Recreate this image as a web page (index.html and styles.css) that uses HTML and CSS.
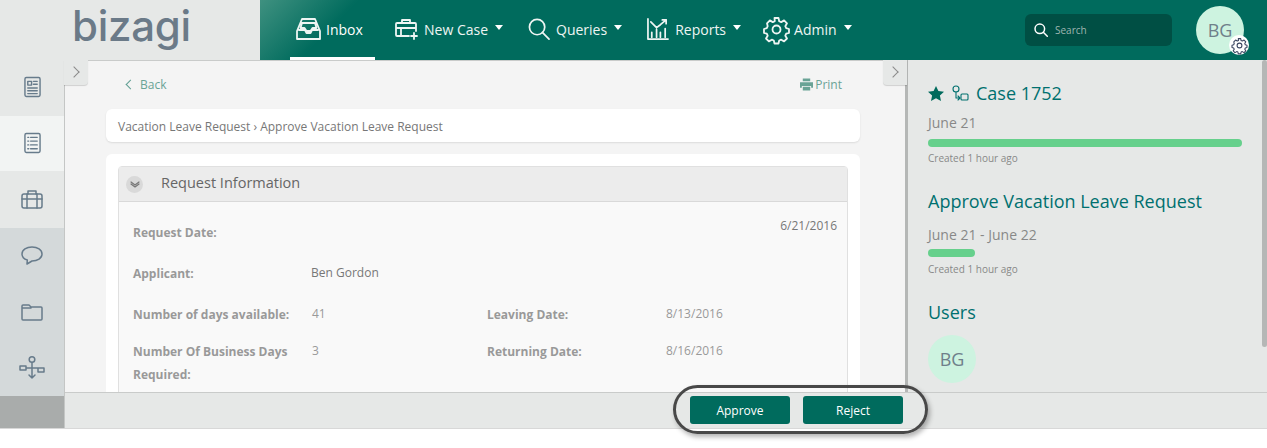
FILE: index.html
```html
<!DOCTYPE html>
<html lang="en">
<head>
	<meta charset="utf-8">
	<title>Bizagi - Inbox</title>
	<link rel="stylesheet" href="styles.css">
</head>
<body>
<div class="shell">

	<header class="topbar">
		<div class="brand"><span class="logo">bizagi</span></div>
		<nav class="nav">
			<a class="nav-item active">
				<svg class="ico-inbox" viewBox="0 0 25 22"><path d="M6 1h13l5 12v8H1v-8z M3 12h6l1.500 3h4l1.500-3h6 M6 5h13l1.500 5h-4l-2 3h-4l-2-3h-4z"/></svg>
				<span>Inbox</span>
			</a>
			<a class="nav-item">
				<svg class="ico-case" viewBox="0 0 24 22"><path d="M14 18H2a1 1 0 0 1-1-1V6a1 1 0 0 1 1-1h18a1 1 0 0 1 1 1v7 M7 5V2h8v3 M1 10h20 M6 10v8 M19 15v6 M16 18h6"/></svg>
				<span>New Case</span><i class="caret"></i>
			</a>
			<a class="nav-item">
				<svg class="ico-query" viewBox="0 0 23 23"><circle cx="9.500" cy="9.500" r="8"/><path d="M15 15l7 7"/></svg>
				<span>Queries</span><i class="caret"></i>
			</a>
			<a class="nav-item reports">
				<svg class="ico-report" viewBox="0 0 23 23"><path d="M1 1v21h21 M5 20v-5 M10 20v-8 M14 20v-5 M19 20v-9 M4 4l6 6 4-3 6-5 M16 2h4v4"/></svg>
				<span>Reports</span><i class="caret"></i>
			</a>
			<a class="nav-item">
				<svg class="ico-gear" viewBox="0 0 25 25"><path d="M10.500 1h4l.7 3.200 2 .9 2.900-1.700 2.900 2.900-1.700 2.900.9 2 2.800.8v4l-2.800.7-.9 2 1.700 2.800-2.900 2.900-2.900-1.700-2 .8-.7 3h-4l-.7-3-2-.8-2.900 1.700-2.900-2.900 1.700-2.800-.9-2-2.800-.7v-4l2.800-.8.900-2L3 6.300l2.900-2.900 2.900 1.700 2-.9z"/><circle cx="12.500" cy="12.500" r="4"/></svg>
				<span>Admin</span><i class="caret"></i>
			</a>
		</nav>
		<div class="search">
			<svg viewBox="0 0 14 14"><circle cx="5.800" cy="5.800" r="4.800"/><path d="M9.300 9.300l4 4"/></svg>
			<span>Search</span>
		</div>
		<div class="avatar top-avatar">
			BG
			<span class="avatar-gear">
				<svg viewBox="0 0 25 25"><path d="M10.500 1h4l.7 3.200 2 .9 2.900-1.700 2.900 2.900-1.700 2.900.9 2 2.800.8v4l-2.800.7-.9 2 1.700 2.800-2.900 2.900-2.900-1.700-2 .8-.7 3h-4l-.7-3-2-.8-2.900 1.700-2.900-2.900 1.700-2.800-.9-2-2.800-.7v-4l2.800-.8.900-2L3 6.300l2.900-2.900 2.900 1.700 2-.9z"/><circle cx="12.500" cy="12.500" r="4"/></svg>
			</span>
		</div>
	</header>

	<div class="workspace">
		<aside class="rail">
			<div class="rail-item h56 lift">
				<svg viewBox="0 0 18 22"><rect x="1" y="1" width="16" height="20" rx="1.500"/><path d="M4 5h4v4H4z M10 5h4 M10 8h4 M4 12h10 M4 15h10 M4 18h10"/></svg>
			</div>
			<div class="rail-item h55 lift current">
				<svg viewBox="0 0 18 22"><rect x="1" y="1" width="16" height="20" rx="1.500"/><path d="M4 5h1 M7 5h7 M4 9h1 M7 9h7 M4 13h1 M7 13h7 M4 17h1 M7 17h7"/></svg>
			</div>
			<div class="rail-item h57 lift">
				<svg class="wide" viewBox="0 0 22 20"><rect x="1" y="5" width="20" height="14" rx="2"/><path d="M7 5V2h8v3 M1 10h20 M6 5v14 M16 5v14"/></svg>
			</div>
			<div class="rail-item h56 dark">
				<svg class="wide" viewBox="0 0 22 20"><path d="M11 1c5.500 0 10 2.900 10 7s-4.500 7-10 7l-5 3 .3-4C3 13 1 11 1 8c0-4.100 4.500-7 10-7z"/></svg>
			</div>
			<div class="rail-item h56 dark">
				<svg class="wide" viewBox="0 0 22 18"><path d="M1 3a1 1 0 0 1 1-1h6l2 2h10a1 1 0 0 1 1 1v11a1 1 0 0 1-1 1H2a1 1 0 0 1-1-1z M1 5h9"/></svg>
			</div>
			<div class="rail-item h56 dark">
				<svg class="flow" viewBox="0 0 26 24"><circle cx="13" cy="3.500" r="2.800"/><path d="M13 6.500V22 M10 19l3 3 3-3 M1 10h6v4H1z M19 12h6v4h-6z M7 12h12"/></svg>
			</div>
			<div class="rail-foot"></div>
		</aside>

		<div class="content">
			<div class="panes">
				<main class="main">
					<span class="tab main-tab"><i class="chev"></i></span>
					<div class="main-top">
						<a class="back"><i class="chev-left"></i>Back</a>
						<a class="print">
							<svg viewBox="0 0 14 13"><path d="M3 0h8v3H3z M0 4h14v6h-2V8H2v2H0z M3 9h8v4H3z"/></svg>Print
						</a>
					</div>
					<div class="crumb">Vacation Leave Request › Approve Vacation Leave Request</div>
					<div class="card">
						<section class="panel">
							<div class="panel-head">
								<span class="collapse"><svg viewBox="0 0 10 7"><path d="M1 1l4 3 4-3 M1 3l4 3 4-3"/></svg></span>
								Request Information
							</div>
							<div class="panel-body">
								<div class="row wide-row">
									<b>Request Date:</b>
									<span class="date">6/21/2016</span>
								</div>
								<div class="row">
									<b>Applicant:</b>
									<span class="name">Ben Gordon</span>
								</div>
								<div class="row short-row">
									<b>Number of days available:</b>
									<span>41</span>
									<b>Leaving Date:</b>
									<span>8/13/2016</span>
								</div>
								<div class="row">
									<b>Number Of Business Days Required:</b>
									<span>3</span>
									<b>Returning Date:</b>
									<span>8/16/2016</span>
								</div>
							</div>
						</section>
					</div>
				</main>

				<aside class="side">
					<span class="tab side-tab"><i class="chev"></i></span>
					<span class="side-thumb"></span>
					<h2 class="case-title">
						<svg class="star" viewBox="0 0 16 15"><path d="M8 0l2.400 5 5.600.7-4.100 3.800 1.100 5.500L8 12.300 3 15l1.100-5.500L0 5.700 5.600 5z"/></svg>
						<svg class="proc" viewBox="0 0 17 16"><circle cx="4" cy="4" r="3"/><path d="M4 7v6h4 M6 11l2 2-2 2"/><rect x="9" y="9" width="7" height="6" rx="1"/></svg>
						Case 1752
					</h2>
					<p class="dates">June 21</p>
					<div class="bar full"></div>
					<p class="created">Created 1 hour ago</p>
					<h2 class="task-title">Approve Vacation Leave Request</h2>
					<p class="dates task-dates">June 21 - June 22</p>
					<div class="bar short"></div>
					<p class="created">Created 1 hour ago</p>
					<h2 class="users-title">Users</h2>
					<div class="avatar">BG</div>
				</aside>
			</div>

			<footer class="actions">
				<button class="btn">Approve</button>
				<button class="btn">Reject</button>
				<span class="ring"></span>
			</footer>
		</div>
	</div>
</div>
</body>
</html>
```
FILE: styles.css
```css
html, body {
	height: 100%;
	margin: 0;
}
body {
	background-color: #fff;
	font-family: "Open Sans", "Liberation Sans", sans-serif;
	overflow: hidden;
}
svg {
	display: block;
	fill: none;
	overflow: visible;
	stroke-linecap: round;
	stroke-linejoin: round;
}
h2, p {
	margin: 0;
	font-weight: normal;
}

.shell {
	height: 428px;
	display: flex;
	flex-direction: column;
	border-bottom: 1px solid #d8d8d8;
}

/* top bar */
.topbar {
	height: 60px;
	flex: none;
	display: flex;
	align-items: center;
	background: #006b5d;
}
.brand {
	width: 260px;
	height: 60px;
	flex: none;
	box-sizing: border-box;
	padding-left: 72px;
	background: #e6e8e7;
}
.logo {
	display: block;
	font-family: Inter, sans-serif;
	font-size: 42px;
	font-weight: 500;
	line-height: 52px;
	letter-spacing: -0.3px;
	color: #6b7a88;
}
.nav {
	width: 765px;
	height: 60px;
	flex: none;
	box-sizing: border-box;
	padding-left: 30px;
	display: flex;
	background: linear-gradient(135deg, #3f9180 0, #006b5d 70px);
}
.nav-item {
	height: 60px;
	box-sizing: border-box;
	padding: 0 6px 2px;
	margin-right: 13px;
	display: flex;
	align-items: center;
	color: #eef5f3;
	font-size: 14px;
}
.nav-item.reports { margin-right: 11px; }
.nav-item svg {
	stroke: #eef5f3;
	stroke-width: 1.8;
	margin-right: 6px;
}
.nav-item.active {
	width: 85px;
	margin-right: 14px;
	padding: 1px 6px 0;
	border-bottom: 3px solid #fff;
	color: #fff;
}
.nav-item .ico-inbox { width: 25px; height: 22px; margin-right: 5px; }
.nav-item .ico-case { width: 24px; height: 22px; margin-right: 5px; }
.nav-item .ico-query { width: 22px; height: 22px; margin-right: 6px; }
.nav-item .ico-report { width: 22px; height: 22px; margin-right: 6px; }
.nav-item .ico-gear { width: 25px; height: 25px; margin-right: 5px; }
.caret {
	width: 0;
	height: 0;
	margin-left: 7px;
	margin-top: -3px;
	border-left: 4px solid transparent;
	border-right: 4px solid transparent;
	border-top: 5px solid #fff;
}
.search {
	width: 147px;
	height: 32px;
	flex: none;
	box-sizing: border-box;
	padding-left: 9px;
	display: flex;
	align-items: center;
	background: #004f44;
	border-radius: 6px;
	color: #9fb5b0;
	font-size: 10px;
}
.search svg {
	width: 14px;
	height: 14px;
	margin-right: 7px;
	stroke: #fff;
	stroke-width: 1.5;
}
.avatar {
	width: 48px;
	height: 48px;
	border-radius: 50%;
	background: #cdf3e0;
	color: #6f7f8a;
	font-size: 18px;
	line-height: 48px;
	text-align: center;
	position: relative;
}
.top-avatar {
	margin-left: 24px;
	flex: none;
}
.avatar-gear {
	position: absolute;
	right: -5px;
	bottom: -1px;
	width: 20px;
	height: 20px;
	border-radius: 50%;
	background: #fff;
}
.avatar-gear svg {
	width: 15px;
	height: 15px;
	margin: 2.500px;
	stroke: #3a4560;
	stroke-width: 1.8;
}

/* everything under the top bar */
.workspace {
	flex: 1;
	min-height: 0;
	display: flex;
}
.rail {
	width: 65px;
	flex: none;
	display: flex;
	flex-direction: column;
	box-sizing: border-box;
	border-right: 1px solid #c4c6c5;
}
.rail-item {
	display: flex;
	align-items: center;
	justify-content: center;
	background: #e6e8e7;
}
.rail-item.lift { padding-bottom: 2px; box-sizing: border-box; }
.rail-item svg {
	width: 17px;
	height: 22px;
	stroke: #677b8b;
	stroke-width: 1.5;
}
.rail-item svg.wide { width: 22px; height: 20px; }
.rail-item svg.flow { width: 26px; height: 24px; }
.rail-item.current { background: #f2f4f3; }
.rail-item.dark { background: #d4d9da; }
.h55 { height: 55px; }
.h56 { height: 56px; }
.h57 { height: 57px; }
.rail-foot {
	flex: 1;
	background: #a9acab;
}

.content {
	flex: 1;
	min-width: 0;
	display: flex;
	flex-direction: column;
}
/* the form runs on under the action bar; the tab pokes out over the rail border */
.panes {
	flex: 1;
	min-height: 0;
	display: flex;
	clip-path: inset(0 0 0 -2px);
}

/* middle column */
.main {
	width: 840px;
	flex: none;
	box-sizing: border-box;
	padding: 0 45px 0 41px;
	background: #f4f4f4;
	border-top: 1px solid #c9cbca;
	position: relative;
}
.tab {
	position: absolute;
	top: -1px;
	width: 24px;
	height: 25px;
	background: #e6e8e7;
	box-shadow: 0 1px 1px rgba(0, 0, 0, .15);
}
.main-tab {
	left: -1px;
	border-radius: 0 0 4px 0;
}
.side-tab {
	left: -25px;
	top: 0;
	border-radius: 0 0 0 4px;
}
.chev {
	display: block;
	width: 7px;
	height: 7px;
	margin: 8px 0 0 6px;
	border-top: 1px solid #8a8a8a;
	border-right: 1px solid #8a8a8a;
	transform: rotate(45deg);
}
.main-top {
	height: 46px;
	margin-bottom: 2px;
	display: flex;
	justify-content: space-between;
	align-items: center;
	padding: 0 18px 0 21px;
	font-size: 12px;
	color: #6aa396;
}
.back {
	display: flex;
	align-items: center;
}
.chev-left {
	width: 6px;
	height: 6px;
	margin-right: 6px;
	border-left: 1px solid #5f9e92;
	border-bottom: 1px solid #5f9e92;
	transform: rotate(45deg);
}
.print {
	display: flex;
	align-items: center;
}
.print svg {
	width: 13px;
	height: 13px;
	margin-right: 2px;
	fill: #6aa396;
}
.crumb {
	height: 33px;
	box-sizing: border-box;
	padding-left: 12px;
	line-height: 35px;
	background: #fff;
	border-radius: 6px;
	box-shadow: 0 1px 2px rgba(0, 0, 0, .1);
	font-size: 12px;
	color: #777;
}
.card {
	margin-top: 12px;
	padding: 12px;
	background: #fff;
	border-radius: 6px 6px 0 0;
}
.panel {
	background: #f9f9f9;
	border: 1px solid #e0e0e0;
	border-radius: 4px 4px 0 0;
}
.panel-head {
	height: 35px;
	box-sizing: border-box;
	display: flex;
	align-items: center;
	padding: 0 0 3px 7px;
	background: #ececec;
	border-bottom: 1px solid #d9d9d9;
	font-size: 14.500px;
	color: #666;
}
.collapse {
	width: 17px;
	height: 17px;
	margin: 3px 18px 0 0;
	border-radius: 50%;
	background: #d9d9d9;
}
.collapse svg {
	width: 10px;
	height: 7px;
	margin: 5px 0 0 4px;
	stroke: #777;
	stroke-width: 1.2;
}
.panel-body {
	padding: 19px 10px 30px 14px;
	font-size: 12px;
	color: #999;
}
.row {
	display: grid;
	grid-template-columns: 179px 175px 179px 1fr;
	min-height: 41px;
	line-height: 23px;
}
.row.short-row { min-height: 37px; }
.row b {
	color: #999;
	font-weight: 700;
	padding-right: 14px;
}
.row span {
	margin-top: -1px;
}
.wide-row span {
	grid-column: 4;
	text-align: right;
	color: #777;
	margin-top: -7px;
}
.row span.name {
	color: #777;
	margin-left: -1px;
}

/* right column */
.side {
	flex: 1;
	box-sizing: border-box;
	padding: 21px 20px 0 20px;
	background: #e6e8e7;
	border-left: 3px solid #b5b7b6;
	color: #888;
	position: relative;
}
.side-thumb {
	position: absolute;
	top: 0;
	right: 0;
	width: 5px;
	height: 287px;
	border-radius: 3px;
	background: #b5b7b6;
}
.case-title, .task-title, .users-title {
	font-size: 18px;
	line-height: 24px;
	color: #00706f;
}
.case-title {
	display: flex;
	align-items: center;
}
.star {
	width: 16px;
	height: 15px;
	margin-right: 8px;
	fill: #006b5d;
}
.proc {
	width: 17px;
	height: 16px;
	margin-right: 7px;
	stroke: #00706f;
	stroke-width: 1.1;
}
.dates {
	margin-top: 8px;
	font-size: 14px;
	line-height: 20px;
}
.bar {
	height: 8px;
	margin-top: 6px;
	border-radius: 4px;
	background: #66d08c;
}
.bar.full { width: 314px; }
.bar.short { width: 47px; }
.created {
	margin-top: 4px;
	font-size: 10px;
	line-height: 14px;
}
.task-title { margin-top: 24px; }
.task-dates { margin-top: 12px; margin-bottom: -1px; }
.task-dates + .bar { margin-top: 5px; }
.task-dates + .bar + .created { margin-top: 5px; }
.users-title { margin-top: 24px; }
.side .avatar { margin-top: 11px; }

/* action bar */
.actions {
	height: 36px;
	flex: none;
	box-sizing: border-box;
	padding: 3px 364px 0 0;
	display: flex;
	justify-content: flex-end;
	gap: 13px;
	background: #e6e8e7;
	border-top: 1px solid #c9cbca;
	position: relative;
	z-index: 2;
}
.btn {
	width: 100px;
	height: 28px;
	padding: 0;
	border: 0;
	border-radius: 3px;
	background: #006b5d;
	color: #fff;
	font-family: inherit;
	font-size: 12px;
}
.ring {
	position: absolute;
	left: 608px;
	top: -8px;
	width: 255px;
	height: 49px;
	box-sizing: border-box;
	border: 3px solid #484848;
	border-radius: 25px;
	box-shadow: 2px 3px 5px rgba(0, 0, 0, .3);
}
```
